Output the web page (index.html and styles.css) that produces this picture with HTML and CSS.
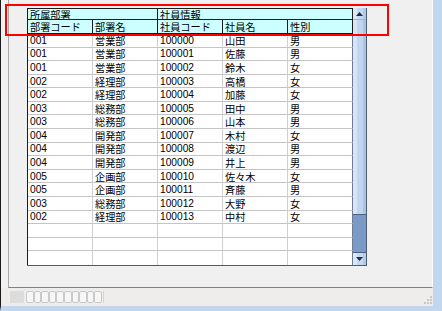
FILE: index.html
```html
<!DOCTYPE html>
<html lang="ja">
<head>
<meta charset="utf-8">
<title>社員一覧</title>
<link rel="stylesheet" href="styles.css">
</head>
<body>
<div class="window">
  <div class="client">
    <div class="panel">
      <div class="grid">
        <div class="table">
          <div class="hc span2">所属部署</div>
          <div class="hc span3">社員情報</div>
          <div class="hc">部署コード</div>
          <div class="hc">部署名</div>
          <div class="hc">社員コード</div>
          <div class="hc">社員名</div>
          <div class="hc">性別</div>

          <div class="c">001</div><div class="c">営業部</div><div class="c">100000</div><div class="c">山田</div><div class="c last">男</div>
          <div class="c">001</div><div class="c">営業部</div><div class="c">100001</div><div class="c">佐藤</div><div class="c last">男</div>
          <div class="c">001</div><div class="c">営業部</div><div class="c">100002</div><div class="c">鈴木</div><div class="c last">女</div>
          <div class="c">002</div><div class="c">経理部</div><div class="c">100003</div><div class="c">高橋</div><div class="c last">女</div>
          <div class="c">002</div><div class="c">経理部</div><div class="c">100004</div><div class="c">加藤</div><div class="c last">女</div>
          <div class="c">003</div><div class="c">総務部</div><div class="c">100005</div><div class="c">田中</div><div class="c last">男</div>
          <div class="c">003</div><div class="c">総務部</div><div class="c">100006</div><div class="c">山本</div><div class="c last">男</div>
          <div class="c">004</div><div class="c">開発部</div><div class="c">100007</div><div class="c">木村</div><div class="c last">女</div>
          <div class="c">004</div><div class="c">開発部</div><div class="c">100008</div><div class="c">渡辺</div><div class="c last">男</div>
          <div class="c">004</div><div class="c">開発部</div><div class="c">100009</div><div class="c">井上</div><div class="c last">男</div>
          <div class="c">005</div><div class="c">企画部</div><div class="c">100010</div><div class="c">佐々木</div><div class="c last">女</div>
          <div class="c">005</div><div class="c">企画部</div><div class="c">100011</div><div class="c">斉藤</div><div class="c last">男</div>
          <div class="c">003</div><div class="c">総務部</div><div class="c">100012</div><div class="c">大野</div><div class="c last">女</div>
          <div class="c">002</div><div class="c">経理部</div><div class="c">100013</div><div class="c">中村</div><div class="c last">女</div>

          <div class="c"></div><div class="c"></div><div class="c"></div><div class="c"></div><div class="c last"></div>
          <div class="c"></div><div class="c"></div><div class="c"></div><div class="c"></div><div class="c last"></div>
          <div class="c end"></div><div class="c end"></div><div class="c end"></div><div class="c end"></div><div class="c last end"></div>
        </div>
        <div class="vscroll">
          <div class="sb-btn sb-up">
            <svg width="7" height="4" viewBox="0 0 7 4"><polygon points="0,4 7,4 3.5,0" fill="#1f2d4a"/></svg>
          </div>
          <div class="sb-thumb"></div>
          <div class="sb-track"></div>
          <div class="sb-btn sb-down">
            <svg width="7" height="4" viewBox="0 0 7 4"><polygon points="0,0 7,0 3.5,4" fill="#1f2d4a"/></svg>
          </div>
        </div>
      </div>
    </div>
    <div class="statusbar">
      <div class="sb-block"></div>
      <div class="progress">
        <span class="seg"></span><span class="seg"></span><span class="seg"></span><span class="seg"></span><span class="seg"></span>
        <span class="seg"></span><span class="seg"></span><span class="seg"></span><span class="seg"></span><span class="seg"></span>
      </div>
      <div class="spacer"></div>
      <svg class="grip" width="8" height="8" viewBox="0 0 8 8">
        <rect x="6" y="0" width="2" height="2" fill="#c8c8c8"/>
        <rect x="3" y="3" width="2" height="2" fill="#c8c8c8"/>
        <rect x="6" y="3" width="2" height="2" fill="#c8c8c8"/>
        <rect x="0" y="6" width="2" height="2" fill="#c8c8c8"/>
        <rect x="3" y="6" width="2" height="2" fill="#c8c8c8"/>
        <rect x="6" y="6" width="2" height="2" fill="#c8c8c8"/>
      </svg>
    </div>
  </div>
  <div class="highlight"></div>
</div>
</body>
</html>
```

FILE: styles.css
```css
* { box-sizing: border-box; }

html, body {
  margin: 0;
  padding: 0;
  width: 442px;
  height: 311px;
  overflow: hidden;
  background: #f0f0f0;
}

body {
  font-family: "Liberation Sans", "Noto Sans CJK JP", sans-serif;
  font-size: 10.2px;
  color: #000;
}

.window {
  position: relative;
  width: 442px;
  height: 311px;
  display: flex;
  border-left: 1px solid #1b1b1b;
  border-right: 9px solid #c2d7ee;
  border-bottom: 5px solid #c2d7ee;
  background: #f0f0f0;
}

.client {
  flex: 1;
  display: flex;
  flex-direction: column;
}

.panel {
  height: 288px;
  margin-left: 7px;
  border-left: 1px solid #a8a8a8;
  border-right: 1px solid #fbfbfb;
  border-bottom: 1px solid #808080;
  padding: 8px 0 0 18px;
}

.grid {
  display: flex;
  width: 340px;
  border-bottom: 1px solid #5a5a5a;
}

.table {
  display: grid;
  grid-template-columns: repeat(5, 65px);
  grid-template-rows: 11px 14px repeat(17, 13.588px);
  border-left: 1px solid #1c1c1c;
  border-top: 1px solid #1c1c1c;
  background: #fff;
}

.hc {
  background: #ccffff;
  border-right: 1px solid #1c1c1c;
  border-bottom: 1px solid #1c1c1c;
  padding-left: 2px;
  display: flex;
  align-items: center;
  white-space: nowrap;
  overflow: hidden;
}

.span2 { grid-column: span 2; }
.span3 { grid-column: span 3; }

.c {
  border-right: 1px solid #cfcfcf;
  border-bottom: 1px solid #c4c4c4;
  padding-left: 2px;
  display: flex;
  align-items: center;
  white-space: nowrap;
  overflow: hidden;
}

.c.last { border-right-color: #6d7b97; }
.c.end { border-bottom: none; }

.vscroll {
  width: 14px;
  display: flex;
  flex-direction: column;
  border-right: 1px solid #4e5b74;
}

.sb-btn {
  display: flex;
  align-items: center;
  justify-content: center;
  background: linear-gradient(to right, #dbe8f8 0 4px, #c6d9f2 4px 10px, #b1c8e7 10px);
}

.sb-up {
  height: 12px;
  border-bottom: 1px solid #9fb6d6;
}

.sb-thumb {
  height: 195px;
  background: linear-gradient(to right, #d7e5f7 0 4px, #c1d5f0 4px 10px, #abc3e5 10px);
  border-bottom: 1px solid #4f6183;
}

.sb-track {
  flex: 1;
  background: #7a9bc7;
}

.sb-down {
  height: 13px;
  border-top: 1px solid #4f6183;
}

.statusbar {
  flex: 1;
  display: flex;
  align-items: center;
  gap: 1px;
  padding: 0 1px 0 9px;
  background: #efedeb;
}

.sb-block {
  width: 14px;
  height: 12px;
  background: #dcdcdc;
}

.progress {
  display: flex;
  height: 12px;
  padding: 0 1px;
  border-right: 1px solid #d6d6d6;
}

.seg {
  width: 7.6px;
  height: 12px;
  border: 1px solid #c9c9c9;
  border-radius: 2px;
  background: #f6f6f6;
}

.spacer { flex: 1; }

.grip {
  align-self: flex-end;
  margin-bottom: 2px;
}

.highlight {
  position: absolute;
  left: 4px;
  top: 4px;
  width: 384px;
  height: 32px;
  border: 2px solid #ff0000;
  pointer-events: none;
}
```
